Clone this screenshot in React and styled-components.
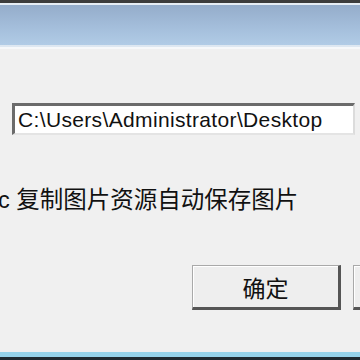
import React from "react";
import styled, { createGlobalStyle } from "styled-components";

const GlobalStyle = createGlobalStyle`
  html, body {
    margin: 0;
    padding: 0;
    background: #f0f0f0;
  }
`;

export default function App() {
  return (
    <>
      <GlobalStyle />
      <Window>
        <TitleBar />
        <Body>
          <PathField>C:\Users\Administrator\Desktop</PathField>
          <HintText>c 复制图片资源自动保存图片</HintText>
          <ButtonRow>
            <DialogButton>确定</DialogButton>
            <DialogButton $clipped />
          </ButtonRow>
        </Body>
        <TaskEdge />
      </Window>
    </>
  );
}

const Window = styled.div`
  width: 360px;
  height: 360px;
  display: flex;
  flex-direction: column;
  overflow: hidden;
  background: #f0f0f0;
  font-family: "Liberation Sans", "Noto Sans CJK SC", sans-serif;
`;

const TitleBar = styled.div`
  height: 44px;
  flex-shrink: 0;
  border-top: 3px solid #3c3c3c;
  box-shadow: inset 0 2px 0 #e6edf4, inset 0 -2px 0 #dde7f1;
  background: linear-gradient(#93abc9 0%, #a4bedb 55%, #b2cde7 100%);
  margin-bottom: 1px;
  border-bottom: 2px solid #f6f8fa;
`;

const Body = styled.div`
  flex: 1;
  display: flex;
  flex-direction: column;
  padding: 53px 0 0 12px;
`;

const PathField = styled.div`
  width: 335px;
  height: 27px;
  background: #fff;
  border-top: 3px solid #6b6b6b;
  border-left: 3px solid #6b6b6b;
  border-right: 2px solid #dcdcdc;
  border-bottom: 2px solid #e4e4e4;
  font-size: 21px;
  letter-spacing: 0.35px;
  line-height: 27px;
  padding-left: 3px;
  color: #111;
  white-space: nowrap;
  overflow: hidden;
`;

const HintText = styled.div`
  margin: 49px 0 0 -14px;
  font-size: 23.5px;
  line-height: 32px;
  color: #111;
  white-space: nowrap;
`;

const ButtonRow = styled.div`
  display: flex;
  gap: 12px;
  margin: 49px 0 0 180px;
`;

const DialogButton = styled.div`
  flex-shrink: 0;
  width: 145px;
  height: 41px;
  background: #eeeeee;
  border-top: 1px solid #a9a9a9;
  border-left: 1px solid #a9a9a9;
  border-right: 3px solid #555;
  border-bottom: 3px solid #555;
  box-shadow: inset 1px 1px 0 #fff;
  display: flex;
  align-items: center;
  justify-content: center;
  font-size: 23px;
  color: #111;
  ${(p) => p.$clipped && "border-right: none;"}
`;

const TaskEdge = styled.div`
  height: 3px;
  flex-shrink: 0;
  border-top: 5px solid #95d3ea;
  background: #1e2a30;
`;
